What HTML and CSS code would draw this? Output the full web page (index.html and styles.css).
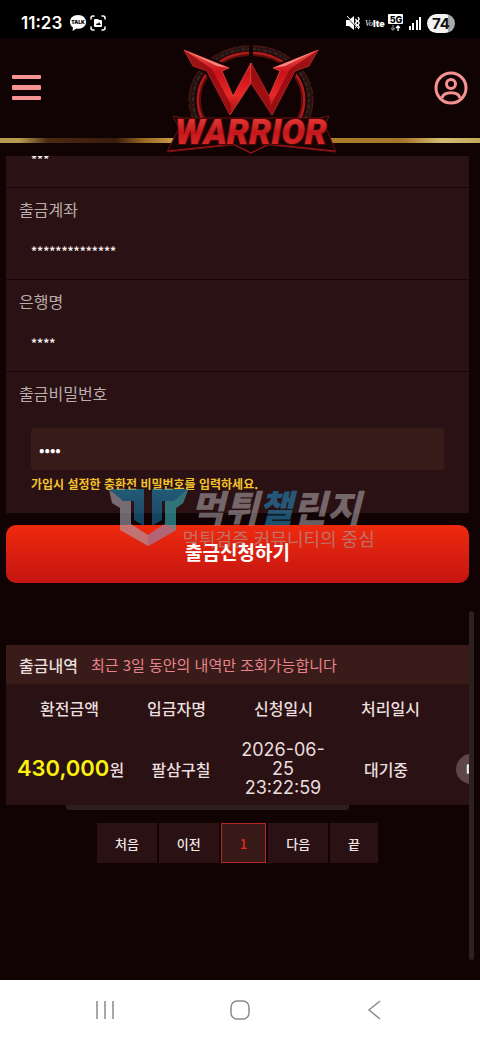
FILE: index.html
```
<!DOCTYPE html>
<html lang="ko">
<head>
    <meta charset="UTF-8">
    <meta name="viewport" content="width=device-width, initial-scale=1.0">
    <title>WARRIOR</title>
    <link rel="stylesheet" href="styles.css">
</head>
<body>
    <div class="status-bar">
        <span class="time">11:23</span>
        <svg class="icon-talk" width="18" height="16" viewBox="0 0 18 16">
            <path fill="#fff" d="M9 0C4 0 1 3 1 7c0 2.500 1 4.500 3 5.500L3.500 16 7.500 13.500C13 14.500 17 11.500 17 7 17 3 14 0 9 0z"/>
            <text class="talk-text" x="9" y="9" text-anchor="middle">TALK</text>
        </svg>
        <svg width="16" height="16" viewBox="0 0 16 16" fill="none" stroke="#fff" stroke-width="1.500" stroke-linecap="round">
            <path d="M1 4V3a2 2 0 0 1 2-2h1M12 1h1a2 2 0 0 1 2 2v1M15 12v1a2 2 0 0 1-2 2h-1M4 15H3a2 2 0 0 1-2-2v-1"/>
            <path fill="#fff" stroke="none" fill-rule="evenodd" d="M5 4h3l1 1h2a1 1 0 0 1 1 1v5a1 1 0 0 1-1 1H5a1 1 0 0 1-1-1V5a1 1 0 0 1 1-1zM6 10h5L9 7 8 9 7 8z"/>
        </svg>
        <div class="status-right">
            <svg width="14" height="14" viewBox="0 0 14 14">
                <path fill="#fff" d="M0 4h3l5-4v14L3 10H0z"/>
                <path fill="none" stroke="#fff" stroke-width="1.400" d="M9.500 3l1.500 2-1.500 2 1.500 2-1.500 3M12 1l1.200 2L12 5l1.200 2L12 9l1.200 2L12 13"/>
                <path stroke="#000" stroke-width="1" d="M0 0l12 13"/>
                <path stroke="#fff" stroke-width="1" d="M1 0l12 13"/>
            </svg>
            <svg class="volte" width="20" height="12" viewBox="0 0 20 12">
                <text class="volte-vo" x="0" y="9">Vo</text>
                <text class="volte-lte" x="8" y="10">lte</text>
            </svg>
            <svg width="16" height="18" viewBox="0 0 16 18">
                <rect width="15" height="10" rx="1" fill="#fff"/>
                <text class="five-g" x="8" y="9" text-anchor="middle">5G</text>
                <path fill="none" stroke="#777" stroke-width="1.300" d="M5 11v5M3 14l2 2 2-2"/>
                <path fill="none" stroke="#fff" stroke-width="1.300" d="M10 17v-5M8 14l2-2 2 2"/>
            </svg>
            <svg class="signal" width="13" height="14" viewBox="0 0 13 14" fill="#fff">
                <rect x="0" y="10" width="2" height="4"/>
                <rect x="3" y="7" width="2" height="7"/>
                <rect x="7" y="4" width="2" height="10"/>
                <rect x="10" y="1" width="2" height="13"/>
            </svg>
            <span class="battery">74</span>
        </div>
    </div>

    <header class="header">
        <button class="icon-btn" type="button" aria-label="메뉴">
            <svg width="29" height="26" viewBox="0 0 29 26" fill="#f69292">
                <rect width="29" height="4" rx="1"/>
                <rect y="10" width="29" height="5" rx="1"/>
                <rect y="21" width="29" height="4" rx="1"/>
            </svg>
        </button>
        <a class="logo" href="#" aria-label="WARRIOR">
            <svg width="172" height="114" viewBox="0 0 172 114">
                <defs>
                    <linearGradient id="blade" x1="0" y1="0" x2="0" y2="1">
                        <stop offset="0" stop-color="#f0504a"/>
                        <stop offset="0.350" stop-color="#c9121a"/>
                        <stop offset="0.700" stop-color="#e62826"/>
                        <stop offset="1" stop-color="#a20d12"/>
                    </linearGradient>
                    <linearGradient id="letters" x1="0" y1="0" x2="0" y2="1">
                        <stop offset="0" stop-color="#f5463f"/>
                        <stop offset="0.500" stop-color="#c2181c"/>
                        <stop offset="1" stop-color="#ea3230"/>
                    </linearGradient>
                    <clipPath id="above-plate">
                        <path d="M0 0h172v78H0z"/>
                    </clipPath>
                </defs>
                <!-- ring -->
                <g clip-path="url(#above-plate)" fill="none">
                    <ellipse cx="86" cy="58" rx="59" ry="52" stroke="#241311" stroke-width="6"/>
                    <ellipse cx="86" cy="58" rx="62" ry="54" stroke="#5b1614" stroke-width="1" stroke-dasharray="18 3 7 2"/>
                    <ellipse cx="86" cy="58" rx="58" ry="51" stroke="#3c2421" stroke-width="2" stroke-dasharray="2 3 4 2"/>
                    <ellipse cx="86" cy="58" rx="53" ry="47" stroke="#b31a19" stroke-width="3"/>
                    <ellipse cx="86" cy="58" rx="51" ry="45" stroke="#58100f" stroke-width="2"/>
                    <path fill="#110303" d="M84 0h4v16h-4z"/>
                </g>
                <!-- blades -->
                <path fill="#160303" stroke="#160303" stroke-width="5" stroke-linejoin="round" d="M19 8l9 16 14 5 23 44 21-32 21 32 23-44 14-5 9-16-45 18 7 3-11 25-18-33-18 33-11-25 7-3z"/>
                <g fill="url(#blade)" stroke="#f2594e" stroke-width="0.600">
                    <path d="M19 8l9 16 14 5 23 44 21-32V21L68 54 57 29l7-3z"/>
                    <path d="M153 8l-9 16-14 5-23 44-21-32V21l18 33 11-25-7-3z"/>
                </g>
                <g fill="#8f0b10" opacity="0.800">
                    <path d="M19 8l9 16 14 5 23 44 1-10-19-36z"/>
                    <path d="M153 8l-9 16-14 5-23 44-1-10 19-36z"/>
                    <path d="M86 21v20l21 32-3-19z"/>
                </g>
                <g fill="#f98a80">
                    <path d="M19 8l45 18-12-2z"/>
                    <path d="M153 8l-45 18 12-2z"/>
                </g>
                <!-- name plate -->
                <path fill="#160405" stroke="#6b1212" stroke-width="1" d="M8 74l10 2h136l10-2-4 9 11 27-68-7-17 8-17-8-67 7 12-24z"/>
                <path fill="none" stroke="#b01717" stroke-width="1" d="M3 109l65-7 18 9 18-9 66 7"/>
                <text class="logo-name" x="86" y="102" text-anchor="middle">WARRIOR</text>
            </svg>
        </a>
        <button class="icon-btn" type="button" aria-label="내 정보">
            <svg width="34" height="34" viewBox="0 0 34 34" fill="none" stroke="#f69292" stroke-width="3">
                <circle cx="17" cy="17" r="15"/>
                <circle cx="17" cy="13" r="4.500"/>
                <path d="M8 27c2-7 16-7 18 0"/>
            </svg>
        </button>
    </header>
    <div class="gold-line"></div>

    <main class="content">
        <form class="withdraw">
            <div class="panel">
                <div class="row row-cut">
                    <input class="masked" type="text" value="***" aria-label="예금주" readonly>
                </div>
                <div class="row">
                    <label for="account">출금계좌</label>
                    <input class="masked" id="account" type="text" value="**************" readonly>
                </div>
                <div class="row">
                    <label for="bank">은행명</label>
                    <input class="masked" id="bank" type="text" value="****" readonly>
                </div>
                <div class="row row-password">
                    <label for="password">출금비밀번호</label>
                    <input class="password" id="password" type="password" value="1234">
                    <p class="hint">가입시 설정한 충환전 비밀번호를 입력하세요.</p>
                </div>
            </div>

            <div class="submit-area">
                <button class="submit" type="button"><span>출금신청하기</span></button>
                <div class="watermark">
                    <svg width="80" height="60" viewBox="0 0 80 60">
                        <defs>
                            <linearGradient id="shield" x1="0" y1="0" x2="0" y2="1">
                                <stop offset="0" stop-color="#1c8db9"/>
                                <stop offset="1" stop-color="#186698"/>
                            </linearGradient>
                        </defs>
                        <path fill="#a9a6b4" d="M0 3l22 11v23l17 11 17-11V14L79 3l-5 13-7 5v22L39 59 11 43V21l-8-5z"/>
                        <path fill="#34b6bd" d="M56 14L79 3l-5 13-7 5v22l-11 6V37z"/>
                        <path fill="#8e8eb9" d="M39 48l17-11 11 6-28 16z"/>
                        <path fill="url(#shield)" d="M0 2h35v37l-10-6V14H14zM79 2H43v37l10-6V14h12z"/>
                    </svg>
                    <div class="watermark-text">
                        <strong>먹튀<em>챌</em>린지</strong>
                        <span>먹튀검증 커뮤니티의 중심</span>
                    </div>
                </div>
            </div>
        </form>

        <section class="history">
            <div class="history-box">
                <div class="history-title">
                    <h2>출금내역</h2>
                    <p>최근 3일 동안의 내역만 조회가능합니다</p>
                </div>
                <table>
                    <thead>
                        <tr>
                            <th>환전금액</th>
                            <th>입금자명</th>
                            <th>신청일시</th>
                            <th>처리일시</th>
                        </tr>
                    </thead>
                    <tbody>
                        <tr>
                            <td><b class="amount">430,000</b>원</td>
                            <td>팔삼구칠</td>
                            <td class="date">2026-06-<br>25<br>23:22:59</td>
                            <td>대기중</td>
                            <td class="action"><button class="memo" type="button">메</button></td>
                        </tr>
                    </tbody>
                </table>
            </div>
            <div class="scroll-x"></div>
            <nav class="pagination">
                <button type="button">처음</button>
                <button type="button">이전</button>
                <button type="button" class="active">1</button>
                <button type="button">다음</button>
                <button type="button">끝</button>
            </nav>
            <div class="scroll-y"></div>
        </section>
    </main>

    <nav class="system-nav">
        <button type="button" aria-label="최근 앱">
            <svg width="20" height="20" viewBox="0 0 20 20" stroke="#8b8b8b" stroke-width="1.500"><path d="M2 1v18M10 1v18M18 1v18"/></svg>
        </button>
        <button type="button" aria-label="홈">
            <svg width="22" height="22" viewBox="0 0 22 22" fill="none" stroke="#8b8b8b" stroke-width="1.500"><rect x="2" y="2" width="18" height="18" rx="6"/></svg>
        </button>
        <button type="button" aria-label="뒤로">
            <svg width="20" height="20" viewBox="0 0 20 20" fill="none" stroke="#8b8b8b" stroke-width="1.500"><path d="M15 1L4 10l11 9"/></svg>
        </button>
    </nav>
</body>
</html>
```
FILE: styles.css
```
* {
    box-sizing: border-box;
}

body {
    margin: 0;
    min-height: 100vh;
    display: flex;
    flex-direction: column;
    background: #110303;
    color: #e9dede;
    font-family: "Noto Sans CJK KR", sans-serif;
    font-size: 16px;
    line-height: 24px;
}

button,
input {
    font-family: inherit;
    border: 0;
    padding: 0;
    margin: 0;
}

h2, p {
    margin: 0;
}

svg {
    display: block;
}

/* status bar */
.status-bar {
    display: flex;
    align-items: center;
    height: 38px;
    padding: 8px 25px 0 21px;
    background: #000;
    color: #fff;
}

.time {
    margin-right: 7px;
    font-family: Inter, sans-serif;
    font-size: 17px;
    font-weight: 600;
}

.icon-talk {
    margin-right: 3px;
}

.talk-text {
    font: 900 5px Inter, sans-serif;
    fill: #000;
}

.status-right {
    display: flex;
    align-items: center;
    margin-left: auto;
}

.volte {
    margin: 0 3px 0 5px;
    fill: #fff;
}

.volte-vo {
    font: italic 8px "Liberation Serif", serif;
}

.volte-lte {
    font: 900 9px Inter, sans-serif;
}

.five-g {
    font: 800 9px Inter, sans-serif;
    fill: #000;
}

.signal {
    margin: 0 5px;
}

.battery {
    width: 28px;
    height: 19px;
    border-radius: 10px;
    background: linear-gradient(90deg, #f4f4f4 74%, #aaa 74%);
    color: #111;
    font-family: Inter, sans-serif;
    font-size: 15px;
    font-weight: 700;
    line-height: 19px;
    text-align: center;
}

/* header */
.header {
    position: relative;
    display: flex;
    align-items: center;
    justify-content: space-between;
    height: 100px;
    padding: 0 12px;
}

.icon-btn {
    background: none;
}

.logo {
    position: absolute;
    z-index: 2;
    top: 4px;
    left: calc(50% - 75px);
}

.logo-name {
    font: italic 900 35px Roboto, sans-serif;
    fill: url(#letters);
    stroke: #4a0808;
    stroke-width: 2px;
    paint-order: stroke;
}

.gold-line {
    height: 5px;
    background: linear-gradient(90deg, #b49a52 0%, #b99a50 4%, #4a2a10 10%, #391b0c 24%, #9a6724 30%, #c69a49 36%, #b3832f 56%, #a5752a 84%, #d2bd73 92%, #c4a95b 100%);
}

/* withdraw form */
.content {
    flex: 1;
    display: flex;
    flex-direction: column;
    padding: 13px 11px 0 6px;
}

.panel {
    overflow: hidden;
    background: #2a1113;
}

.row {
    display: flex;
    flex-direction: column;
    gap: 6px;
    padding: 9px 25px 12px 13px;
    border-bottom: 1px solid #170607;
}

.row-cut {
    margin-top: -21px;
    padding-top: 0;
}

.row label {
    color: #b9adae;
}

.masked,
.password {
    margin-left: 12px;
    height: 40px;
    background: transparent;
    color: #f2eaea;
    outline: none;
}

.masked {
    padding-top: 6px;
    font-size: 12px;
    font-weight: 700;
}

.row-password {
    padding-bottom: 17px;
    border-bottom: 0;
}

.password {
    height: 42px;
    margin-top: 17px;
    padding: 0 8px;
    border-radius: 4px;
    background: #371b19;
    color: #fff;
    font-size: 16px;
}

.hint {
    margin-left: 12px;
    margin-top: -4px;
    color: #f4c22d;
    font-size: 12px;
    font-weight: 700;
    line-height: 24px;
}

.submit-area {
    position: relative;
    margin-top: 12px;
}

.submit {
    width: 100%;
    height: 58px;
    padding-bottom: 6px;
    border-radius: 10px;
    background: linear-gradient(#ee2a0d, #c41512);
    color: #fff;
    font-size: 19px;
    font-weight: 700;
}

.submit span {
    position: relative;
    z-index: 2;
}

/* watermark lies over the panel and the button */
.watermark {
    position: absolute;
    z-index: 1;
    top: -38px;
    left: calc(50% - 129px);
    display: flex;
    opacity: 0.6;
    pointer-events: none;
    white-space: nowrap;
}

.watermark-text {
    display: flex;
    flex-direction: column;
    margin-left: -6px;
}

.watermark strong {
    padding-left: 8px;
    color: #a69fa3;
    font-size: 37px;
    font-style: italic;
    font-weight: 900;
    line-height: 38px;
}

.watermark em {
    color: #2388b8;
}

.watermark span {
    color: #aaa1a3;
    font-size: 18px;
    line-height: 26px;
}

/* withdraw history */
.history {
    position: relative;
    flex: 1;
    padding: 62px 0 40px;
}

.history-box {
    overflow: hidden;
    background: #2a1113;
}

.history-title {
    display: flex;
    align-items: center;
    gap: 13px;
    height: 39px;
    padding-left: 13px;
    background: #391c1a;
}

.history-title h2 {
    font-size: 16px;
    font-weight: 500;
}

.history-title p {
    color: #e8838b;
    font-size: 15px;
}

table,
thead,
tbody {
    display: block;
}

tr {
    display: grid;
    align-items: center;
}

thead tr {
    grid-template-columns: repeat(4, 107px);
    height: 48px;
    padding-left: 10px;
}

tbody tr {
    grid-template-columns: 129px 92px 112px 94px 100px;
    height: 73px;
}

th,
td {
    padding: 0;
    font-weight: 500;
    text-align: center;
    white-space: nowrap;
}

.amount {
    color: #fbf20c;
    font-family: Inter, sans-serif;
    font-size: 22px;
    font-weight: 600;
}

.date {
    font-family: Inter, sans-serif;
    font-size: 18px;
    font-weight: 400;
    line-height: 19px;
}

.action {
    padding-left: 23px;
    text-align: left;
}

.memo {
    width: 60px;
    height: 30px;
    padding-left: 10px;
    border-radius: 15px;
    background: #5f4748;
    color: #fff;
    font-size: 14px;
    font-weight: 700;
    text-align: left;
}

.scroll-x {
    width: 61%;
    height: 5px;
    margin-left: 13%;
    border-radius: 0 0 3px 3px;
    background: #2c1e1e;
}

.scroll-y {
    position: absolute;
    top: 28px;
    right: -5px;
    bottom: 20px;
    width: 5px;
    border-radius: 3px;
    background: #2c2020;
}

.pagination {
    display: flex;
    justify-content: center;
    gap: 2px;
    margin-top: 13px;
}

.pagination button {
    height: 40px;
    padding: 0 18px;
    background: #2a1113;
    color: #f0e6e6;
    font-size: 13px;
    font-weight: 500;
}

.pagination .active {
    border: 1px solid #b32a25;
    background: #371917;
    color: #e52b20;
}

/* android navigation */
.system-nav {
    display: flex;
    align-items: center;
    justify-content: space-around;
    height: 60px;
    padding: 0 38px;
    background: #fff;
}

.system-nav button {
    background: none;
}
```
